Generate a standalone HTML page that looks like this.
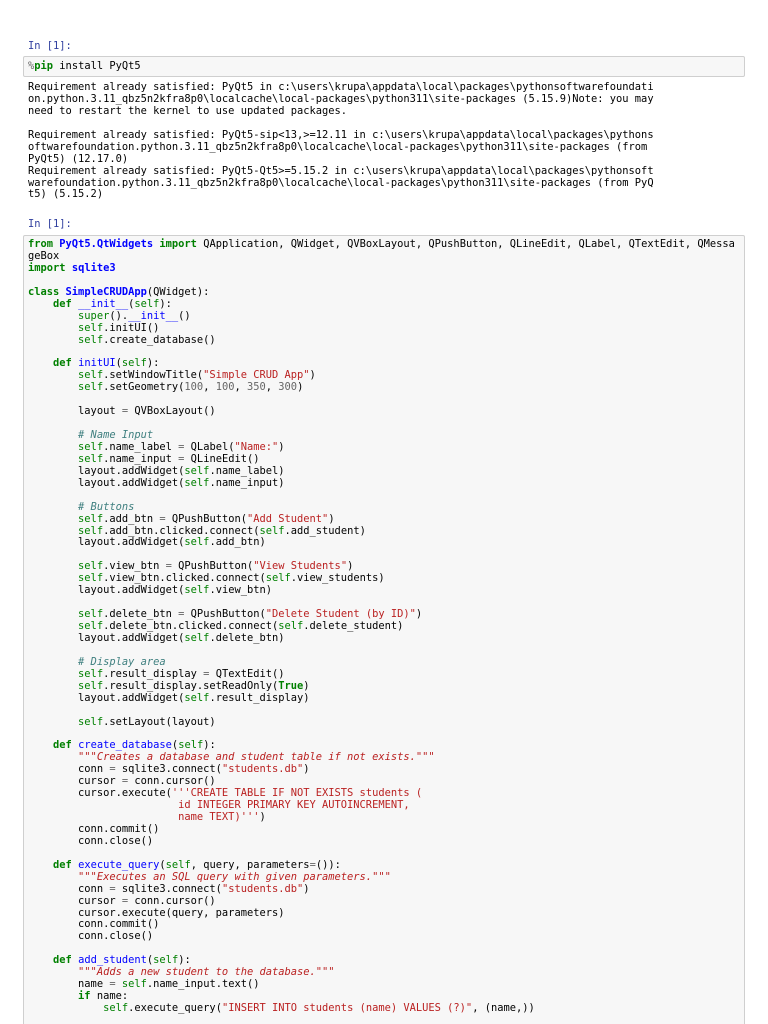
<!DOCTYPE html>
<html style="overflow:hidden;height:1024px"><head><meta charset="utf-8"><style>
body{margin:0;width:768px;height:1024px;overflow:hidden;background:#fff;font-family:"DejaVu Sans Mono","Liberation Mono",monospace;position:relative;}
pre{margin:0;font-family:"DejaVu Sans Mono","Liberation Mono",monospace;font-size:10.4px;line-height:11.94px;position:absolute;left:28px;color:#000;white-space:pre;}
.p{position:absolute;left:28px;font-size:10.4px;color:#303F9F;}
.box{position:absolute;left:23px;width:720px;border:1px solid #cfcfcf;background:#f7f7f7;border-radius:2px;}
.k{color:#008000;font-weight:bold}
.s{color:#008000}
.n{color:#0000ff;font-weight:bold}
.f{color:#0000ff}
.st{color:#BA2121}
.c{color:#408080;font-style:italic}
.d{color:#BA2121;font-style:italic}
.m{color:#666}
.o{color:#666}
</style></head><body>
<div class="p" style="top:40px">In [1]:</div>
<div class="box" style="top:56px;height:19px"></div>
<pre style="top:61px"><span class="o">%</span><span class="k">pip</span> install PyQt5</pre>
<pre style="top:82px">Requirement already satisfied: PyQt5 in c:\users\krupa\appdata\local\packages\pythonsoftwarefoundati
on.python.3.11_qbz5n2kfra8p0\localcache\local-packages\python311\site-packages (5.15.9)Note: you may
need to restart the kernel to use updated packages.

Requirement already satisfied: PyQt5-sip&lt;13,&gt;=12.11 in c:\users\krupa\appdata\local\packages\pythons
oftwarefoundation.python.3.11_qbz5n2kfra8p0\localcache\local-packages\python311\site-packages (from
PyQt5) (12.17.0)
Requirement already satisfied: PyQt5-Qt5&gt;=5.15.2 in c:\users\krupa\appdata\local\packages\pythonsoft
warefoundation.python.3.11_qbz5n2kfra8p0\localcache\local-packages\python311\site-packages (from PyQ
t5) (5.15.2)</pre>
<div class="p" style="top:218px">In [1]:</div>
<div class="box" style="top:235px;height:830px"></div>
<pre style="top:239px"><span class="k">from</span> <span class="n">PyQt5.QtWidgets</span> <span class="k">import</span> QApplication, QWidget, QVBoxLayout, QPushButton, QLineEdit, QLabel, QTextEdit, QMessa
geBox
<span class="k">import</span> <span class="n">sqlite3</span>

<span class="k">class</span> <span class="n">SimpleCRUDApp</span>(QWidget):
    <span class="k">def</span> <span class="f">__init__</span>(<span class="s">self</span>):
        <span class="s">super</span>().<span class="f">__init__</span>()
        <span class="s">self</span>.initUI()
        <span class="s">self</span>.create_database()

    <span class="k">def</span> <span class="f">initUI</span>(<span class="s">self</span>):
        <span class="s">self</span>.setWindowTitle(<span class="st">"Simple CRUD App"</span>)
        <span class="s">self</span>.setGeometry(<span class="m">100</span>, <span class="m">100</span>, <span class="m">350</span>, <span class="m">300</span>)

        layout <span class="o">=</span> QVBoxLayout()

        <span class="c"># Name Input</span>
        <span class="s">self</span>.name_label <span class="o">=</span> QLabel(<span class="st">"Name:"</span>)
        <span class="s">self</span>.name_input <span class="o">=</span> QLineEdit()
        layout.addWidget(<span class="s">self</span>.name_label)
        layout.addWidget(<span class="s">self</span>.name_input)

        <span class="c"># Buttons</span>
        <span class="s">self</span>.add_btn <span class="o">=</span> QPushButton(<span class="st">"Add Student"</span>)
        <span class="s">self</span>.add_btn.clicked.connect(<span class="s">self</span>.add_student)
        layout.addWidget(<span class="s">self</span>.add_btn)

        <span class="s">self</span>.view_btn <span class="o">=</span> QPushButton(<span class="st">"View Students"</span>)
        <span class="s">self</span>.view_btn.clicked.connect(<span class="s">self</span>.view_students)
        layout.addWidget(<span class="s">self</span>.view_btn)

        <span class="s">self</span>.delete_btn <span class="o">=</span> QPushButton(<span class="st">"Delete Student (by ID)"</span>)
        <span class="s">self</span>.delete_btn.clicked.connect(<span class="s">self</span>.delete_student)
        layout.addWidget(<span class="s">self</span>.delete_btn)

        <span class="c"># Display area</span>
        <span class="s">self</span>.result_display <span class="o">=</span> QTextEdit()
        <span class="s">self</span>.result_display.setReadOnly(<span class="k">True</span>)
        layout.addWidget(<span class="s">self</span>.result_display)

        <span class="s">self</span>.setLayout(layout)

    <span class="k">def</span> <span class="f">create_database</span>(<span class="s">self</span>):
        <span class="d">"""Creates a database and student table if not exists."""</span>
        conn <span class="o">=</span> sqlite3.connect(<span class="st">"students.db"</span>)
        cursor <span class="o">=</span> conn.cursor()
        cursor.execute(<span class="st">'''CREATE TABLE IF NOT EXISTS students (</span>
<span class="st">                        id INTEGER PRIMARY KEY AUTOINCREMENT,</span>
<span class="st">                        name TEXT)'''</span>)
        conn.commit()
        conn.close()

    <span class="k">def</span> <span class="f">execute_query</span>(<span class="s">self</span>, query, parameters<span class="o">=</span>()):
        <span class="d">"""Executes an SQL query with given parameters."""</span>
        conn <span class="o">=</span> sqlite3.connect(<span class="st">"students.db"</span>)
        cursor <span class="o">=</span> conn.cursor()
        cursor.execute(query, parameters)
        conn.commit()
        conn.close()

    <span class="k">def</span> <span class="f">add_student</span>(<span class="s">self</span>):
        <span class="d">"""Adds a new student to the database."""</span>
        name <span class="o">=</span> <span class="s">self</span>.name_input.text()
        <span class="k">if</span> name:
            <span class="s">self</span>.execute_query(<span class="st">"INSERT INTO students (name) VALUES (?)"</span>, (name,))</pre>
</body></html>
